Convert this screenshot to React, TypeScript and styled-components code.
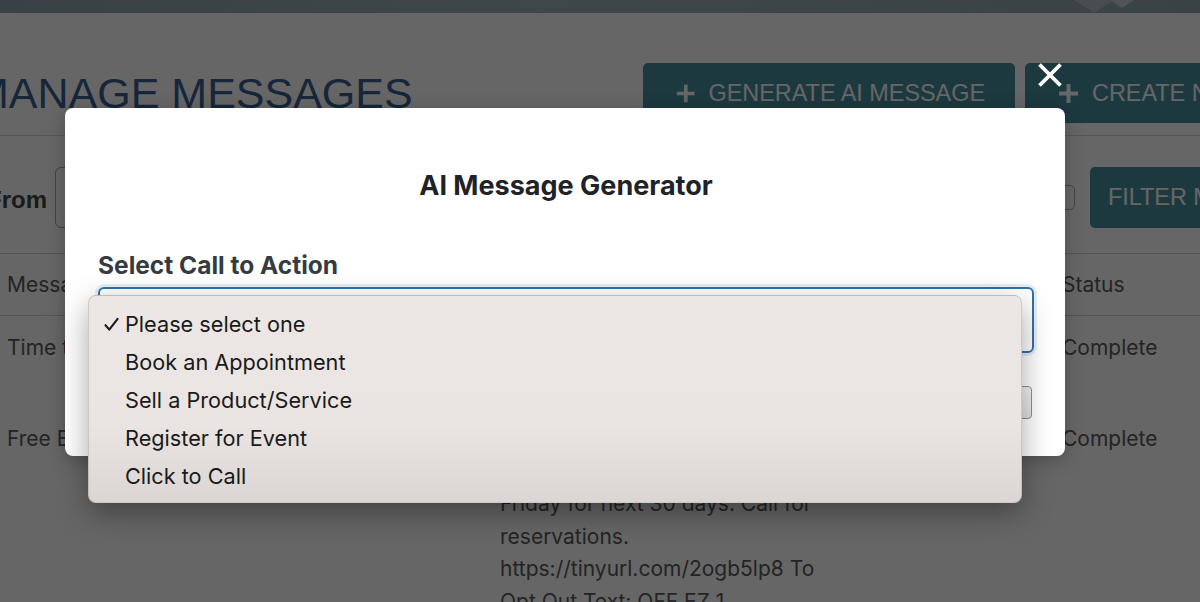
import React from 'react';
import styled, { createGlobalStyle } from 'styled-components';

const GlobalStyle = createGlobalStyle`
  html, body {
    margin: 0;
    padding: 0;
    background: #fff;
  }
  body {
    overflow: hidden;
    font-family: Inter, "Liberation Sans", sans-serif;
  }
`;

const Screen = styled.div`
  position: relative;
  width: 1200px;
  height: 602px;
  overflow: hidden;
  background: #fff;
`;

const TopBand = styled.div`
  height: 13px;
  display: flex;
  justify-content: flex-end;
  padding-right: 60px;
  background: linear-gradient(to right, #8fa4ae, #9db1b9 45%, #91a6af);
`;

const Page = styled.div`
  margin-right: -200px;
`;

const Header = styled.header`
  display: flex;
  align-items: center;
  gap: 10px;
  margin-top: 50px;
  padding-bottom: 12px;
  border-bottom: 1px solid #d2d2d2;
`;

const Title = styled.h1`
  flex: 1;
  margin: 0 0 0 -27px;
  font-family: "Liberation Sans", Arial, sans-serif;
  font-weight: 400;
  font-size: 43px;
  line-height: 1;
  color: #3a5f95;
  text-transform: uppercase;
  white-space: nowrap;
`;

const ActionButton = styled.button<{ $width: number }>`
  flex: 0 0 ${(p) => p.$width}px;
  height: 60px;
  display: flex;
  align-items: center;
  gap: 13px;
  padding: 0 30px 0 33px;
  border: none;
  border-radius: 5px;
  background: #48909f;
  color: #fff;
  font-family: "Liberation Sans", Arial, sans-serif;
  font-size: 23.4px;
  text-transform: uppercase;
  white-space: nowrap;
  overflow: hidden;
`;

const Plus = () => (
  <svg width="21" height="21" viewBox="0 0 21 21">
    <path d="M10.5 1v19M1 10.5h19" stroke="#fff" strokeWidth="4" />
  </svg>
);

const FilterRow = styled.div`
  display: flex;
  align-items: center;
  margin-top: 31px;
  height: 61px;
`;

const FieldLabel = styled.label`
  margin-left: -13px;
  padding-top: 5px;
  font-family: "Liberation Sans", Arial, sans-serif;
  font-weight: 700;
  font-size: 24px;
  color: #444;
`;

const DateInput = styled.div`
  margin-left: 8px;
  width: 420px;
  height: 59px;
  border: 1px solid #a8a8a8;
  border-radius: 6px;
  background: #fff;
`;

const SmallSelect = styled.div`
  margin-left: auto;
  width: 180px;
  height: 23px;
  border: 1px solid #a8a8a8;
  border-radius: 5px;
`;

const FilterButton = styled(ActionButton)`
  margin-left: 15px;
  height: 61px;
  padding-left: 18px;
  font-size: 23.4px;
`;

const Table = styled.div`
  margin-top: 25px;
  border-top: 1px solid #d2d2d2;
  font-family: Inter, "Liberation Sans", sans-serif;
  font-size: 21px;
  color: #5a5a5a;
`;

const Row = styled.div<{ $head?: boolean }>`
  display: grid;
  grid-template-columns: 493px 562px 1fr;
  padding: ${(p) => (p.$head ? '0' : '16px 0 10px')};
  padding-left: 7px;
  line-height: ${(p) => (p.$head ? '61px' : '32.5px')};
  border-bottom: ${(p) => (p.$head ? '1px solid #d2d2d2' : 'none')};
`;

const Cell = styled.div`
  white-space: nowrap;
`;

const Overlay = styled.div`
  position: absolute;
  inset: 0;
  background: rgba(0, 0, 0, 0.6);
`;

const Modal = styled.div`
  position: absolute;
  left: 65px;
  top: 108px;
  width: 1000px;
  box-sizing: border-box;
  padding: 62px 31px 37px 33px;
  border-radius: 8px;
  background: #fff;
  box-shadow: 0 4px 18px rgba(0, 0, 0, 0.25);
`;

const ModalTitle = styled.h2`
  margin: 0 0 50px;
  text-align: center;
  font-size: 27px;
  font-weight: 700;
  line-height: 32px;
  color: #1f2226;
`;

const Label = styled.div`
  margin-bottom: 9px;
  font-size: 24.5px;
  font-weight: 700;
  line-height: 26px;
  color: #363b41;
`;

const SelectWrap = styled.div`
  position: relative;
`;

const SelectBox = styled.div`
  height: 62px;
  border: 2px solid #3470ad;
  border-radius: 6px;
  padding: 0 16px;
  display: flex;
  align-items: center;
  font-size: 20px;
  color: #222;
  box-shadow: 0 0 0 3px rgba(52, 112, 173, 0.12);
`;

const Menu = styled.ul`
  position: absolute;
  left: -10px;
  right: 12px;
  top: 8px;
  margin: 0;
  padding: 9px 0 7px;
  list-style: none;
  border: 1px solid rgba(0, 0, 0, 0.13);
  border-radius: 8px;
  background: linear-gradient(to bottom, #ece7e4 0%, #eae5e2 62%, #dbd6d3 100%);
  box-shadow: 0 10px 30px rgba(0, 0, 0, 0.35);
`;

const MenuItem = styled.li`
  display: grid;
  grid-template-columns: 21px 1fr;
  align-items: center;
  height: 38px;
  padding-left: 15px;
  font-size: 21.7px;
  color: #1a1a1a;
`;

const Check = () => (
  <svg width="15" height="15" viewBox="0 0 15 15">
    <path d="M1.5 8.2 L5.3 12.6 L13.6 1.8" fill="none" stroke="#1c1c1c" strokeWidth="2.1" strokeLinecap="round" strokeLinejoin="round" />
  </svg>
);

const Footer = styled.div`
  display: flex;
  justify-content: flex-end;
  margin-top: 33px;
  padding-right: 2px;
`;

const SubmitButton = styled.button`
  height: 33px;
  padding: 0 14px;
  border: 1px solid #8f8f8f;
  border-radius: 4px;
  background: linear-gradient(#f4f4f4, #e2e2e2);
  font-family: Inter, sans-serif;
  font-size: 16px;
  color: #222;
`;

const CloseButton = styled.button`
  position: absolute;
  left: 1037px;
  top: 62px;
  width: 26px;
  height: 26px;
  padding: 0;
  border: none;
  background: none;
`;

const options = [
  'Please select one',
  'Book an Appointment',
  'Sell a Product/Service',
  'Register for Event',
  'Click to Call',
];

const App = () => (
  <Screen>
    <GlobalStyle />
    <TopBand>
      <svg width="70" height="13" viewBox="0 0 70 13">
        <path d="M4 0 L24 13 L44 0 Z" fill="#b3c1cc" />
        <path d="M40 0 L52 8 L64 0 Z" fill="#c9d3da" />
      </svg>
    </TopBand>
    <Page>
      <Header>
        <Title>Manage Messages</Title>
        <ActionButton $width={372}>
          <Plus />
          Generate AI Message
        </ActionButton>
        <ActionButton $width={375}>
          <Plus />
          Create New Message
        </ActionButton>
      </Header>
      <FilterRow>
        <FieldLabel>From</FieldLabel>
        <DateInput />
        <SmallSelect />
        <FilterButton $width={310}>Filter Messages</FilterButton>
      </FilterRow>
      <Table>
        <Row $head>
          <Cell>Message Name</Cell>
          <Cell>Message</Cell>
          <Cell>Status</Cell>
        </Row>
        <Row>
          <Cell>Time to Book</Cell>
          <Cell>
            Book your next visit today and
            <br />
            save 10% on any service.
          </Cell>
          <Cell>Complete</Cell>
        </Row>
        <Row>
          <Cell>Free Entry Friday</Cell>
          <Cell>
            Free entry every Friday night.
            <br />
            Join us this weekend and every
            <br />
            Friday for next 30 days. Call for
            <br />
            reservations.
            <br />
            https://tinyurl.com/2ogb5lp8 To
            <br />
            Opt Out Text: OFF EZ 1
          </Cell>
          <Cell>Complete</Cell>
        </Row>
      </Table>
    </Page>
    <Overlay />
    <CloseButton aria-label="Close">
      <svg width="26" height="26" viewBox="0 0 26 26">
        <path d="M2.5 2.5 L23.5 23.5 M23.5 2.5 L2.5 23.5" stroke="#fff" strokeWidth="3.8" />
      </svg>
    </CloseButton>
    <Modal>
      <ModalTitle>AI Message Generator</ModalTitle>
      <Label>Select Call to Action</Label>
      <SelectWrap>
        <SelectBox>Please select one</SelectBox>
        <Menu>
          {options.map((o, i) => (
            <MenuItem key={o}>
              <span>{i === 0 ? <Check /> : null}</span>
              <span>{o}</span>
            </MenuItem>
          ))}
        </Menu>
      </SelectWrap>
      <Footer>
        <SubmitButton>Generate</SubmitButton>
      </Footer>
    </Modal>
  </Screen>
);

export default App;
